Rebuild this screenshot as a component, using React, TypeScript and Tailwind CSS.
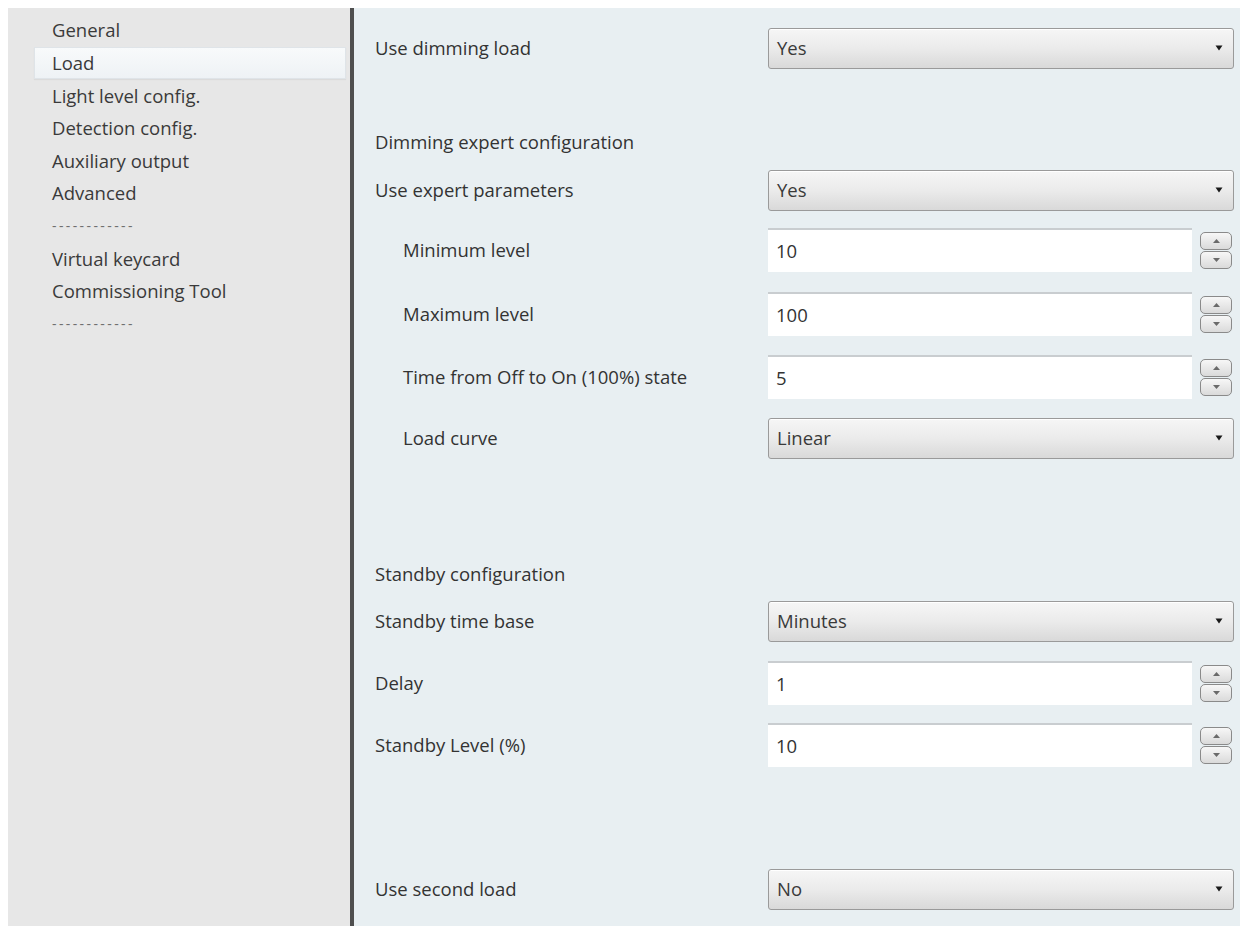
const font = { fontFamily: '"Open Sans", "Noto Sans", sans-serif' };

const navItems = [
  'General',
  'Load',
  'Light level config.',
  'Detection config.',
  'Auxiliary output',
  'Advanced',
  '------------',
  'Virtual keycard',
  'Commissioning Tool',
  '------------',
];

function Dropdown({ value }: { value: string }) {
  return (
    <div className="flex h-[41px] w-[466px] items-center justify-between rounded-[3px] border border-[#9a9a9a] bg-gradient-to-b from-[#f6f6f6] via-[#ebebeb] to-[#d9d9d9] pl-[8px] pr-[10px] shadow-[inset_0_1px_0_#ffffff]">
      <span className="text-[#3a3a3a]">{value}</span>
      <svg width="8" height="6" viewBox="0 0 8 6">
        <path d="M0.5 0.5 L7.5 0.5 L4 5.5 Z" fill="#1a1a1a" />
      </svg>
    </div>
  );
}

function SpinButton({ up }: { up?: boolean }) {
  return (
    <div className="flex h-[18px] w-[32px] items-center justify-center rounded-[5px] border border-[#8a8a8a] bg-gradient-to-b from-[#f7f7f7] to-[#dadada]">
      <svg width="7" height="4" viewBox="0 0 7 4">
        {up ? (
          <path d="M0 4 L7 4 L3.5 0 Z" fill="#6a6a6a" />
        ) : (
          <path d="M0 0 L7 0 L3.5 4 Z" fill="#6a6a6a" />
        )}
      </svg>
    </div>
  );
}

function NumberField({ value }: { value: string }) {
  return (
    <div className="flex w-[466px] items-center gap-[8px]">
      <div className="flex h-[44px] flex-1 items-center border-t-2 border-[#c9cdd0] bg-white pl-[8px] text-[#333]">
        {value}
      </div>
      <div className="flex flex-col gap-[1px] pr-[2px]">
        <SpinButton up />
        <SpinButton />
      </div>
    </div>
  );
}

function Row({
  label,
  indent,
  className,
  children,
}: {
  label: string;
  indent?: boolean;
  className?: string;
  children: React.ReactNode;
}) {
  return (
    <div className={`flex h-[44px] items-center ${className ?? ''}`}>
      <div className={`w-[414px] text-[#333] ${indent ? 'pl-[49px]' : 'pl-[21px]'}`}>{label}</div>
      {children}
    </div>
  );
}

export default function App() {
  return (
    <div
      className="flex h-[926px] w-[1246px] overflow-hidden bg-white pl-[8px] pr-[6px] pt-[8px] text-[18.5px]"
      style={font}
    >
      {/* parameter tree */}
      <div className="w-[342px] bg-[#e7e7e7] pt-[6px]">
        {navItems.map((item, i) =>
          i === 1 ? (
            <div
              key={i}
              className="ml-[26px] mr-[4px] flex h-[32.6px] items-center border border-[#dfe4e8] bg-gradient-to-b from-[#f8fafb] to-[#eef2f5] pl-[17px] text-[#3a3a3a] shadow-[0_1px_1px_rgba(0,0,0,0.05)]"
            >
              {item}
            </div>
          ) : (
            <div
              key={i}
              className={`flex h-[32.6px] items-center pl-[44px] ${
                item.startsWith('-') ? 'text-[14px] tracking-[2.4px] text-[#6f6f6f]' : 'text-[#3a3a3a]'
              }`}
            >
              {item}
            </div>
          ),
        )}
      </div>

      <div className="w-[4px] bg-[#4f4f4f]" />

      {/* parameter page */}
      <div className="flex-1 bg-[#e8eff2] pt-[18px]">
        <Row label="Use dimming load">
          <Dropdown value="Yes" />
        </Row>

        <div className="mt-[62px] flex h-[20px] items-center pl-[21px] text-[#333]">
          Dimming expert configuration
        </div>

        <Row label="Use expert parameters" className="mt-[16px]">
          <Dropdown value="Yes" />
        </Row>
        <Row label="Minimum level" indent className="mt-[16px]">
          <NumberField value="10" />
        </Row>
        <Row label="Maximum level" indent className="mt-[20px]">
          <NumberField value="100" />
        </Row>
        <Row label="Time from Off to On (100%) state" indent className="mt-[19px]">
          <NumberField value="5" />
        </Row>
        <Row label="Load curve" indent className="mt-[17px]">
          <Dropdown value="Linear" />
        </Row>

        <div className="mt-[104px] flex h-[20px] items-center pl-[21px] text-[#333]">
          Standby configuration
        </div>

        <Row label="Standby time base" className="mt-[15px]">
          <Dropdown value="Minutes" />
        </Row>
        <Row label="Delay" className="mt-[18px]">
          <NumberField value="1" />
        </Row>
        <Row label="Standby Level (%)" className="mt-[18px]">
          <NumberField value="10" />
        </Row>

        <Row label="Use second load" className="mt-[100px]">
          <Dropdown value="No" />
        </Row>
      </div>
    </div>
  );
}
